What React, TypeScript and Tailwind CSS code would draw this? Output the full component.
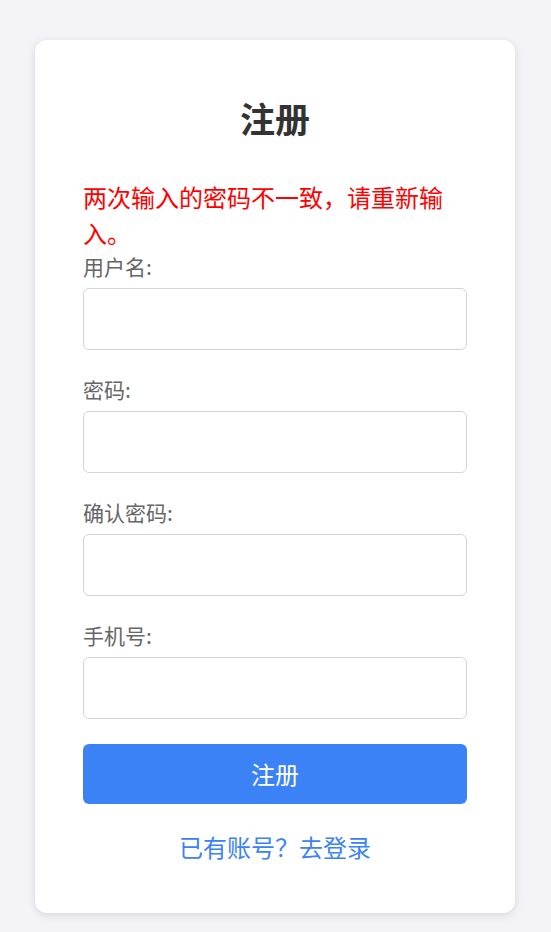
const fields = ["用户名:", "密码:", "确认密码:", "手机号:"];

export default function App() {
  return (
    <div
      className="min-h-screen bg-[#f3f3f8] pt-10 pb-5"
      style={{ fontFamily: '"Noto Sans CJK SC", "Noto Sans", sans-serif' }}
    >
      <div className="ml-[35px] w-[480px] rounded-xl bg-white px-12 pt-12 pb-12 shadow-[0_2px_8px_rgba(0,0,0,0.12)]">
        <h2 className="text-center text-[35px] font-bold leading-[60px] text-[#333]">注册</h2>

        <p className="mt-[31px] text-[24px] leading-[36px] text-[#ff0000]">
          两次输入的密码不一致，请重新输入。
        </p>

        {fields.map((label, i) => (
          <div key={label} className={i === fields.length - 1 ? "mb-[25px]" : "mb-6"}>
            <label className="mb-[6px] block text-[21px] leading-[31px] text-[#666]">{label}</label>
            <input
              type={label.startsWith("密码") || label.startsWith("确认") ? "password" : "text"}
              className="block h-[62px] w-full rounded-md border border-[#d1d5db] bg-white px-3 text-[18px] outline-none"
            />
          </div>
        ))}

        <button className="block h-[60px] w-full rounded-md bg-[#3b82f6] text-[24px] text-white">
          注册
        </button>

        <p className="mt-[25px] text-center text-[24px] leading-[36px] text-[#3b82f6]">
          已有账号？去登录
        </p>
      </div>
    </div>
  );
}
